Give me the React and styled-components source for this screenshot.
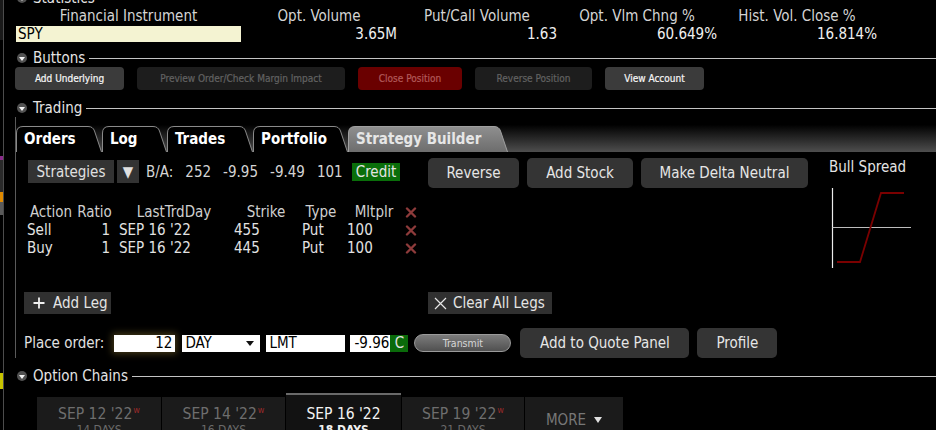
import React from 'react';
import styled, { createGlobalStyle } from 'styled-components';

const FONT = `"DejaVu Sans Condensed", "DejaVu Sans", "Noto Sans", sans-serif`;

const GlobalStyle = createGlobalStyle`
  html, body { margin: 0; padding: 0; background: #000; }
  body { font-family: ${FONT}; color: #dcdcdc; font-size: 15px; overflow: hidden; }
  #root { width: 936px; height: 430px; overflow: hidden; }
  * { box-sizing: border-box; }
`;

const Page = styled.div`
  display: flex;
  width: 936px;
  height: 430px;
  overflow: hidden;
  background: #000;
`;

const EdgeStrip = styled.div`
  width: 4px;
  flex: none;
  display: flex;
  flex-direction: column;
  border-right: 1px solid #4c4c4c;
`;

const EdgeMark = styled.div`
  height: ${p => p.$h}px;
  width: 3px;
  flex: none;
  background: ${p => p.$c || 'transparent'};
`;

const Main = styled.div`
  flex: 1;
  min-width: 0;
  margin-left: 3px;
  margin-top: -11px;
  display: flex;
  flex-direction: column;
`;

const SectionHeader = styled.div`
  display: flex;
  align-items: center;
  height: 18px;
  flex: none;
  padding-left: 10px;
  margin-top: ${p => p.$mt || 0}px;
`;

const Toggle = styled.span`
  width: 10px;
  height: 10px;
  border-radius: 50%;
  background: #525252;
  flex: none;
  display: flex;
  align-items: center;
  justify-content: center;
  &::after {
    content: '';
    border-left: 3px solid transparent;
    border-right: 3px solid transparent;
    border-top: 4px solid #f4f4f4;
    margin-top: 1px;
  }
`;

const SectionTitle = styled.span`
  margin-left: 6px;
  color: #e4e4e4;
  line-height: 18px;
  white-space: nowrap;
`;

const SectionRule = styled.span`
  flex: 1;
  height: 1px;
  background: #c4c4c4;
  margin-left: 4px;
`;

const StatsGrid = styled.div`
  display: grid;
  grid-template-columns: 225px 156px 160px 160px 160px;
  grid-template-rows: 18px 16px;
  row-gap: 1px;
  padding-left: 9px;
  flex: none;
`;

const StatLabel = styled.div`
  text-align: center;
  line-height: 18px;
  color: #d4d4d4;
  white-space: nowrap;
`;

const StatValue = styled.div`
  text-align: right;
  line-height: 16px;
  color: #f0f0f0;
`;

const SymbolCell = styled.div`
  background: #f4f3d2;
  color: #000;
  line-height: 16px;
  padding-left: 2px;
`;

const ButtonBar = styled.div`
  display: flex;
  gap: 13px;
  padding-left: 8px;
  height: 23px;
  flex: none;
`;

const tones = {
  normal: { bg: '#3b3b3b', fg: '#f6f6f6' },
  muted: { bg: '#1d1d1d', fg: '#626262' },
  danger: { bg: '#6a0000', fg: '#b25a5a' },
};

const SmallButton = styled.div`
  width: ${p => p.$w}px;
  height: 23px;
  border-radius: 4px;
  background: ${p => tones[p.$tone].bg};
  color: ${p => tones[p.$tone].fg};
  font-size: 10px;
  display: flex;
  align-items: center;
  justify-content: center;
  white-space: nowrap;
  -webkit-text-stroke: 0.2px currentColor;
`;

const TradingPanel = styled.div`
  margin-left: 8px;
  border-left: 1px solid #5a5a5a;
  display: flex;
  flex-direction: column;
  flex: none;
`;

const TabStrip = styled.div`
  height: 35px;
  display: flex;
  align-items: flex-end;
  background: linear-gradient(#000 0%, #000 22%, #4e4e4e 100%);
`;

const TabBox = styled.div`
  position: relative;
  width: ${p => p.$w}px;
  height: 26px;
  flex: none;
`;

const TabShape = styled.svg`
  position: absolute;
  left: 0;
  top: 0;
`;

const TabLabel = styled.span`
  position: relative;
  display: block;
  padding-left: 8px;
  line-height: 26px;
  font-weight: bold;
  font-size: 15px;
  color: ${p => (p.$active ? '#e6e6e6' : '#ffffff')};
  white-space: nowrap;
`;

const Tab = ({ w, active, children }) => {
  const s = 7;
  const d = `M0.5,26 L0.5,7 Q0.5,0.5 7,0.5 L${w - s - 7},0.5 Q${w - s - 2},0.5 ${w - s - 0.5},5 L${w - 0.5},26`;
  return (
    <TabBox $w={w}>
      <TabShape width={w} height={26} viewBox={`0 0 ${w} 26`}>
        {active && (
          <defs>
            <linearGradient id="activeTab" x1="0" y1="0" x2="0" y2="1">
              <stop offset="0" stopColor="#8f8f8f" />
              <stop offset="1" stopColor="#6d6d6d" />
            </linearGradient>
          </defs>
        )}
        <path d={`${d} Z`} fill={active ? 'url(#activeTab)' : '#000'} />
        <path d={d} fill="none" stroke={active ? '#a0a0a0' : '#8a8a8a'} strokeWidth="1" />
      </TabShape>
      <TabLabel $active={active}>{children}</TabLabel>
    </TabBox>
  );
};

const Content = styled.div`
  height: 206px;
  padding: 6px 0 0 8px;
  display: flex;
  flex-direction: column;
`;

const TopArea = styled.div`
  display: flex;
  height: 156px;
`;

const LeftCol = styled.div`
  width: 404px;
  flex: none;
  display: flex;
  flex-direction: column;
`;

const MidCol = styled.div`
  width: 401px;
  flex: none;
  display: flex;
  flex-direction: column;
`;

const RightCol = styled.div`
  display: flex;
  flex-direction: column;
`;

const StrategyBar = styled.div`
  display: flex;
  align-items: center;
  height: 27px;
  padding-left: 4px;
`;

const DarkBox = styled.div`
  width: ${p => p.$w}px;
  height: 23px;
  margin-right: ${p => p.$mr || 0}px;
  background: #333;
  color: #e0e0e0;
  display: flex;
  align-items: center;
  justify-content: center;
  flex: none;
`;

const Quote = styled.span`
  color: #d4d4d4;
  margin-right: ${p => (p.$mr ?? 12)}px;
  white-space: nowrap;
`;

const CreditTag = styled.span`
  background: #0a6e0a;
  color: #e4e4e4;
  height: 18px;
  line-height: 18px;
  padding: 0 4px;
`;

const LegGrid = styled.div`
  display: grid;
  grid-template-columns: 48px 39px 120px 64px 46px 60px 14px;
  grid-auto-rows: 18px;
  align-items: center;
  margin-top: 18px;
  margin-left: 3px;
`;

const HeadCell = styled.div`
  text-align: center;
  color: #cfcfcf;
  white-space: nowrap;
`;

const Cell = styled.div`
  text-align: ${p => p.$align || 'left'};
  padding-left: ${p => p.$pl || 0}px;
  padding-right: ${p => p.$pr || 0}px;
  color: #e2e2e2;
  white-space: nowrap;
`;

const IconCell = styled.div`
  display: flex;
  align-items: center;
  justify-content: center;
`;

const RemoveIcon = () => (
  <svg width="12" height="11" viewBox="0 0 12 11">
    <path d="M2 1.5 L10 9.5 M10 1.5 L2 9.5" stroke="#8e3b3b" strokeWidth="2.4" strokeLinecap="round" />
  </svg>
);

const PlusIcon = () => (
  <svg width="12" height="12" viewBox="0 0 12 12">
    <path d="M6 0.5 V11.5 M0.5 6 H11.5" stroke="#f0f0f0" strokeWidth="1.8" />
  </svg>
);

const CrossIcon = () => (
  <svg width="13" height="13" viewBox="0 0 13 13">
    <path d="M1 1 L12 12 M12 1 L1 12" stroke="#e6e6e6" strokeWidth="1.2" />
  </svg>
);

const LegButton = styled.div`
  margin-top: auto;
  width: ${p => p.$w}px;
  height: 22px;
  background: #303030;
  color: #e4e4e4;
  display: flex;
  align-items: center;
  padding-left: ${p => p.$pl}px;
  gap: ${p => p.$gap}px;
  white-space: nowrap;
`;

const ActionRow = styled.div`
  display: flex;
  gap: 8px;
  height: 30px;
`;

const ActionButton = styled.div`
  width: ${p => p.$w}px;
  height: 30px;
  margin-right: ${p => p.$mr || 0}px;
  border-radius: 5px;
  background: #343434;
  color: #e6e6e6;
  display: flex;
  align-items: center;
  justify-content: center;
  white-space: nowrap;
  flex: none;
`;

const ChartTitle = styled.div`
  line-height: 18px;
  color: #e4e4e4;
  white-space: nowrap;
`;

const ChartSvg = styled.svg`
  margin-top: 10px;
  display: block;
`;

const OrderRow = styled.div`
  margin-top: 14px;
  height: 30px;
  display: flex;
  align-items: center;
`;

const OrderLabel = styled.span`
  color: #e0e0e0;
  margin-right: 10px;
  white-space: nowrap;
`;

const Field = styled.div`
  width: ${p => p.$w}px;
  height: 17px;
  margin-right: ${p => p.$mr || 0}px;
  background: #fff;
  color: #000;
  line-height: 17px;
  padding: 0 ${p => (p.$tight ? 1 : 3)}px;
  flex: none;
  display: flex;
  align-items: center;
  justify-content: ${p => (p.$align === 'right' ? 'flex-end' : 'space-between')};
  box-shadow: ${p => (p.$glow ? '0 0 7px 2px rgba(120, 100, 40, 0.55)' : 'none')};
`;

const Caret = styled.span`
  width: 0;
  height: 0;
  border-left: 4px solid transparent;
  border-right: 4px solid transparent;
  border-top: 5px solid #111;
  margin-right: 3px;
`;

const GreenTag = styled.div`
  width: 18px;
  height: 17px;
  margin-right: 6px;
  background: #0a6a0a;
  color: #e0e0e0;
  line-height: 17px;
  text-align: center;
  flex: none;
`;

const Transmit = styled.div`
  width: 97px;
  height: 18px;
  margin-right: 9px;
  border-radius: 9px;
  border: 1px solid #9a9a9a;
  background: linear-gradient(#7c7c7c, #505050);
  color: #d6d6d6;
  font-size: 10.5px;
  display: flex;
  align-items: center;
  justify-content: center;
  flex: none;
`;

const DateRow = styled.div`
  margin-top: 8px;
  padding-left: 30px;
  display: flex;
  align-items: flex-start;
  gap: 1px;
`;

const DateTab = styled.div`
  width: ${p => p.$w}px;
  height: ${p => (p.$active ? 50 : 46)}px;
  margin-top: ${p => (p.$active ? 0 : 4)}px;
  background: ${p => (p.$active ? '#121212' : '#1b1b1b')};
  border-top: ${p => (p.$active ? '2px solid #6a6a6a' : 'none')};
  padding-top: ${p => (p.$active ? 10 : 8)}px;
  text-align: center;
  flex: none;
`;

const DateLine = styled.div`
  font-size: 15.5px;
  line-height: 18px;
  color: ${p => (p.$active ? '#f2f2f2' : '#6e6e6e')};
  white-space: nowrap;
`;

const Weekly = styled.sup`
  font-size: 9px;
  color: #9a2a2a;
  vertical-align: 6px;
  line-height: 0;
  margin-left: 1px;
`;

const DaysLine = styled.div`
  font-size: 12px;
  line-height: 14px;
  font-weight: ${p => (p.$active ? 'bold' : 'normal')};
  color: ${p => (p.$active ? '#f0f0f0' : '#6a6a6a')};
`;

const MoreLabel = styled.div`
  padding-top: 6px;
  font-size: 15px;
  line-height: 18px;
  color: #777;
  display: flex;
  align-items: center;
  justify-content: center;
  gap: 8px;
  &::after {
    content: '';
    border-left: 4px solid transparent;
    border-right: 4px solid transparent;
    border-top: 6px solid #e0e0e0;
  }
`;

const legs = [
  { action: 'Sell', ratio: 1, day: "SEP 16 '22", strike: 455, type: 'Put', mult: 100 },
  { action: 'Buy', ratio: 1, day: "SEP 16 '22", strike: 445, type: 'Put', mult: 100 },
];

const dates = [
  { w: 124, date: "SEP 12 '22", days: '14 DAYS', weekly: true },
  { w: 123, date: "SEP 14 '22", days: '16 DAYS', weekly: true },
  { w: 115, date: "SEP 16 '22", days: '18 DAYS', active: true },
  { w: 122, date: "SEP 19 '22", days: '21 DAYS', weekly: true },
];

const Section = ({ title, mt }) => (
  <SectionHeader $mt={mt}>
    <Toggle />
    <SectionTitle>{title}</SectionTitle>
    <SectionRule />
  </SectionHeader>
);

export default function App() {
  return (
    <>
      <GlobalStyle />
      <Page>
        <EdgeStrip>
          <EdgeMark $h={40} $c="#1a1a1a" />
          <EdgeMark $h={116} />
          <EdgeMark $h={4} $c="#8a2a8a" />
          <EdgeMark $h={32} $c="#2a2a2a" />
          <EdgeMark $h={10} $c="#e08a00" />
          <EdgeMark $h={13} $c="#5a5a5a" />
          <EdgeMark $h={158} />
          <EdgeMark $h={16} $c="#c8c400" />
        </EdgeStrip>
        <Main>
          <Section title="Statistics" />
          <StatsGrid>
            <StatLabel>Financial Instrument</StatLabel>
            <StatLabel>Opt. Volume</StatLabel>
            <StatLabel>Put/Call Volume</StatLabel>
            <StatLabel>Opt. Vlm Chng %</StatLabel>
            <StatLabel>Hist. Vol. Close %</StatLabel>
            <SymbolCell>SPY</SymbolCell>
            <StatValue>3.65M</StatValue>
            <StatValue>1.63</StatValue>
            <StatValue>60.649%</StatValue>
            <StatValue>16.814%</StatValue>
          </StatsGrid>

          <Section title="Buttons" mt={7} />
          <ButtonBar>
            <SmallButton $w={109} $tone="normal">Add Underlying</SmallButton>
            <SmallButton $w={208} $tone="muted">Preview Order/Check Margin Impact</SmallButton>
            <SmallButton $w={104} $tone="danger">Close Position</SmallButton>
            <SmallButton $w={117} $tone="muted">Reverse Position</SmallButton>
            <SmallButton $w={99} $tone="normal">View Account</SmallButton>
          </ButtonBar>

          <Section title="Trading" mt={9} />
          <TradingPanel>
            <TabStrip>
              <Tab w={86}>Orders</Tab>
              <Tab w={65}>Log</Tab>
              <Tab w={86}>Trades</Tab>
              <Tab w={95}>Portfolio</Tab>
              <Tab w={160} active>Strategy Builder</Tab>
            </TabStrip>
            <Content>
              <TopArea>
                <LeftCol>
                  <StrategyBar>
                    <DarkBox $w={86} $mr={3}>Strategies</DarkBox>
                    <DarkBox $w={22} $mr={7}>▼</DarkBox>
                    <Quote>B/A:</Quote>
                    <Quote>252</Quote>
                    <Quote>-9.95</Quote>
                    <Quote>-9.49</Quote>
                    <Quote $mr={9}>101</Quote>
                    <CreditTag>Credit</CreditTag>
                  </StrategyBar>
                  <LegGrid>
                    <HeadCell>Action</HeadCell>
                    <HeadCell>Ratio</HeadCell>
                    <HeadCell>LastTrdDay</HeadCell>
                    <HeadCell>Strike</HeadCell>
                    <HeadCell>Type</HeadCell>
                    <HeadCell>Mltplr</HeadCell>
                    <IconCell><RemoveIcon /></IconCell>
                    {legs.map(l => (
                      <React.Fragment key={l.action}>
                        <Cell>{l.action}</Cell>
                        <Cell $align="right" $pr={4}>{l.ratio}</Cell>
                        <Cell $pl={5}>{l.day}</Cell>
                        <Cell>{l.strike}</Cell>
                        <Cell $pl={4}>{l.type}</Cell>
                        <Cell $pl={3}>{l.mult}</Cell>
                        <IconCell><RemoveIcon /></IconCell>
                      </React.Fragment>
                    ))}
                  </LegGrid>
                  <LegButton $w={87} $pl={9} $gap={8}>
                    <PlusIcon />
                    Add Leg
                  </LegButton>
                </LeftCol>
                <MidCol>
                  <ActionRow>
                    <ActionButton $w={91}>Reverse</ActionButton>
                    <ActionButton $w={106}>Add Stock</ActionButton>
                    <ActionButton $w={167}>Make Delta Neutral</ActionButton>
                  </ActionRow>
                  <LegButton $w={124} $pl={6} $gap={6}>
                    <CrossIcon />
                    Clear All Legs
                  </LegButton>
                </MidCol>
                <RightCol>
                  <ChartTitle>Bull Spread</ChartTitle>
                  <ChartSvg width="84" height="84" viewBox="0 0 84 84">
                    <line x1="3.5" y1="2" x2="3.5" y2="82" stroke="#ececec" strokeWidth="1.2" />
                    <line x1="3.5" y1="41.5" x2="82" y2="41.5" stroke="#bdbdbd" strokeWidth="1.2" />
                    <polyline points="8,76 31,76 52,7 75,7" fill="none" stroke="#7a0000" strokeWidth="1.8" />
                  </ChartSvg>
                </RightCol>
              </TopArea>
              <OrderRow>
                <OrderLabel>Place order:</OrderLabel>
                <Field $w={61} $mr={7} $align="right" $glow>12</Field>
                <Field $w={78} $mr={6}>DAY<Caret /></Field>
                <Field $w={79} $mr={5}>LMT</Field>
                <Field $w={40} $align="right" $tight>-9.96</Field>
                <GreenTag>C</GreenTag>
                <Transmit>Transmit</Transmit>
                <ActionButton $w={169} $mr={8}>Add to Quote Panel</ActionButton>
                <ActionButton $w={80}>Profile</ActionButton>
              </OrderRow>
            </Content>
          </TradingPanel>

          <Section title="Option Chains" mt={9} />
          <DateRow>
            {dates.map(d => (
              <DateTab key={d.date} $w={d.w} $active={d.active}>
                <DateLine $active={d.active}>
                  {d.date}
                  {d.weekly && <Weekly>w</Weekly>}
                </DateLine>
                <DaysLine $active={d.active}>{d.days}</DaysLine>
              </DateTab>
            ))}
            <DateTab $w={98}>
              <MoreLabel>MORE</MoreLabel>
            </DateTab>
          </DateRow>
        </Main>
      </Page>
    </>
  );
}
